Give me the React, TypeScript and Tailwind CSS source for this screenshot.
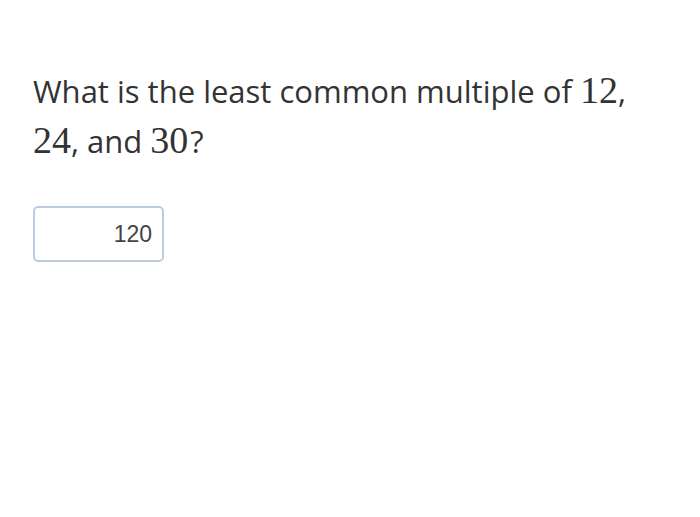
export default function App() {
  return (
    <div className="w-[700px] h-[517px] bg-white overflow-hidden">
      <div className="pt-[66px] pl-[33px] pr-[40px]">
        <p className="text-[31px] leading-[49px] text-[#333333] font-['Open_Sans',sans-serif]">
          What is the least common multiple of{" "}
          <span className="text-[38px] font-['Liberation_Serif',serif]">12</span>,{" "}
          <span className="text-[38px] font-['Liberation_Serif',serif]">24</span>, and{" "}
          <span className="text-[38px] font-['Liberation_Serif',serif] mr-[2px]">30</span>?
        </p>
        <div className="mt-[40px] w-[131px] h-[56px] border-2 border-[#bccbe2] rounded-[5px] flex items-center justify-end pr-[10px]">
          <span className="text-[23px] text-[#444444] font-['Liberation_Sans',sans-serif]">120</span>
        </div>
      </div>
    </div>
  );
}
